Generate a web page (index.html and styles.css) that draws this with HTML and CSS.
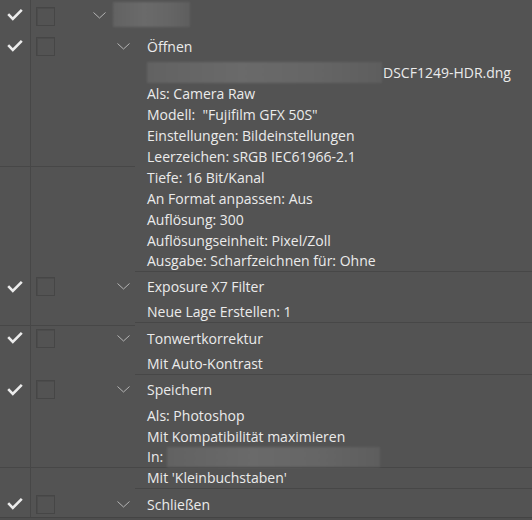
FILE: index.html
```html
<!DOCTYPE html>
<html lang="de">
<head>
<meta charset="utf-8">
<title>Aktionen</title>
<link rel="stylesheet" href="styles.css">
</head>
<body>
<div class="panel">
  <div class="row top">
    <div class="chk"><svg class="tick" width="16" height="12" viewBox="0 0 16 12"><path d="M1.2 5.2 L5.8 9.8 L14.8 0.9" /></svg></div>
    <div class="box"></div>
    <svg class="chev-set" width="13" height="7" viewBox="0 0 13 7"><path d="M0.5 0.5 L6.5 6 L12.5 0.5" /></svg>
    <div class="blur blur-name"></div>
  </div>

  <div class="row head">
    <div class="gut"><div class="chk"><svg class="tick" width="16" height="12" viewBox="0 0 16 12"><path d="M1.2 5.2 L5.8 9.8 L14.8 0.9" /></svg></div><div class="box"></div><svg class="chev" width="13" height="7" viewBox="0 0 13 7"><path d="M0.5 0.5 L6.5 6 L12.5 0.5" /></svg></div>
    <div class="txt"><div class="ln">Öffnen</div></div>
  </div>
  <div class="row det first">
    <div class="gut"><div class="chk"></div></div>
    <div class="txt"><div class="ln"><span class="blur blur-path"></span>DSCF1249-HDR.dng</div></div>
  </div>
  <div class="row det"><div class="gut"><div class="chk"></div></div><div class="txt"><div class="ln">Als: Camera Raw</div></div></div>
  <div class="row det"><div class="gut"><div class="chk"></div></div><div class="txt"><div class="ln">Modell:&nbsp; "Fujifilm GFX 50S"</div></div></div>
  <div class="row det"><div class="gut"><div class="chk"></div></div><div class="txt"><div class="ln">Einstellungen: Bildeinstellungen</div></div></div>
  <div class="row det"><div class="gut gline"><div class="chk"></div></div><div class="txt"><div class="ln">Leerzeichen: sRGB IEC61966-2.1</div></div></div>
  <div class="row det"><div class="gut"><div class="chk"></div></div><div class="txt"><div class="ln">Tiefe: 16 Bit/Kanal</div></div></div>
  <div class="row det"><div class="gut"><div class="chk"></div></div><div class="txt"><div class="ln">An Format anpassen: Aus</div></div></div>
  <div class="row det"><div class="gut"><div class="chk"></div></div><div class="txt"><div class="ln">Auflösung: 300</div></div></div>
  <div class="row det"><div class="gut"><div class="chk"></div></div><div class="txt"><div class="ln">Auflösungseinheit: Pixel/Zoll</div></div></div>
  <div class="row det last"><div class="gut"><div class="chk"></div></div><div class="txt"><div class="ln">Ausgabe: Scharfzeichnen für: Ohne</div></div></div>

  <div class="row head">
    <div class="gut"><div class="chk"><svg class="tick" width="16" height="12" viewBox="0 0 16 12"><path d="M1.2 5.2 L5.8 9.8 L14.8 0.9" /></svg></div><div class="box"></div><svg class="chev" width="13" height="7" viewBox="0 0 13 7"><path d="M0.5 0.5 L6.5 6 L12.5 0.5" /></svg></div>
    <div class="txt"><div class="ln">Exposure X7 Filter</div></div>
  </div>
  <div class="row det first last"><div class="gut gline"><div class="chk"></div></div><div class="txt"><div class="ln">Neue Lage Erstellen: 1</div></div></div>

  <div class="row head">
    <div class="gut"><div class="chk"><svg class="tick" width="16" height="12" viewBox="0 0 16 12"><path d="M1.2 5.2 L5.8 9.8 L14.8 0.9" /></svg></div><div class="box"></div><svg class="chev" width="13" height="7" viewBox="0 0 13 7"><path d="M0.5 0.5 L6.5 6 L12.5 0.5" /></svg></div>
    <div class="txt"><div class="ln">Tonwertkorrektur</div></div>
  </div>
  <div class="row det first last"><div class="gut"><div class="chk"></div></div><div class="txt"><div class="ln">Mit Auto-Kontrast</div></div></div>

  <div class="row head">
    <div class="gut"><div class="chk"><svg class="tick" width="16" height="12" viewBox="0 0 16 12"><path d="M1.2 5.2 L5.8 9.8 L14.8 0.9" /></svg></div><div class="box"></div><svg class="chev" width="13" height="7" viewBox="0 0 13 7"><path d="M0.5 0.5 L6.5 6 L12.5 0.5" /></svg></div>
    <div class="txt"><div class="ln">Speichern</div></div>
  </div>
  <div class="row det first"><div class="gut"><div class="chk"></div></div><div class="txt"><div class="ln">Als: Photoshop</div></div></div>
  <div class="row det"><div class="gut"><div class="chk"></div></div><div class="txt"><div class="ln">Mit Kompatibilität maximieren</div></div></div>
  <div class="row det"><div class="gut gline"><div class="chk"></div></div><div class="txt"><div class="ln split">In: <span class="blur blur-in"></span></div></div></div>
  <div class="row det last"><div class="gut"><div class="chk"></div></div><div class="txt"><div class="ln">Mit 'Kleinbuchstaben'</div></div></div>

  <div class="row head">
    <div class="gut"><div class="chk"><svg class="tick" width="16" height="12" viewBox="0 0 16 12"><path d="M1.2 5.2 L5.8 9.8 L14.8 0.9" /></svg></div><div class="box"></div><svg class="chev" width="13" height="7" viewBox="0 0 13 7"><path d="M0.5 0.5 L6.5 6 L12.5 0.5" /></svg></div>
    <div class="txt"><div class="ln">Schließen</div></div>
  </div>
  <div class="foot"></div>
</div>
</body>
</html>
```

FILE: styles.css
```css
html, body {
  margin: 0;
  padding: 0;
  background: #535353;
  overflow: hidden;
}

.panel {
  width: 532px;
  height: 520px;
  display: flex;
  flex-direction: column;
  background: #535353;
  color: #ebebeb;
  font-family: "Open Sans", "Noto Sans", sans-serif;
  font-size: 14px;
}

.row {
  display: flex;
  flex: none;
}

.row.top {
  height: 33.5px;
  align-items: stretch;
}

.row.top .chk {
  padding-bottom: 3px;
}

.row.top .box {
  align-self: flex-start;
  margin-top: 7px;
}

.chev-set {
  align-self: flex-start;
  flex: none;
  margin-top: 12px;
  margin-left: 38px;
}

.chev-set path,
.chev path {
  fill: none;
  stroke: #b4b4b4;
  stroke-width: 1;
}

.blur-name {
  align-self: flex-start;
  margin-top: 2px;
  margin-left: 7px;
  width: 77px;
  height: 25px;
}

.gut {
  width: 135px;
  flex: none;
  display: flex;
  align-items: center;
  box-sizing: border-box;
}

.gut.gline {
  border-bottom: 1px solid #474747;
}

.chk {
  width: 30px;
  align-self: stretch;
  flex: none;
  border-right: 1px solid #474747;
  display: flex;
  align-items: center;
  justify-content: center;
}

.tick path {
  fill: none;
  stroke: #ececec;
  stroke-width: 2.6;
  stroke-linecap: butt;
  stroke-linejoin: miter;
}

.box {
  width: 19px;
  height: 19px;
  margin-left: 5px;
  flex: none;
  border: 1px solid #464646;
  box-shadow: inset 1px 1px 0 #4c4c4c;
  box-sizing: border-box;
}

.chev {
  margin-left: 62px;
  flex: none;
}

.txt {
  flex: 1;
  min-width: 0;
}

.ln {
  padding-left: 12px;
  line-height: 21px;
  white-space: nowrap;
  display: flex;
  align-items: center;
}

.row.head {
  height: 25.5px;
}

.row.head .txt {
  display: flex;
  align-items: center;
}

.row.det.first .txt {
  padding-top: 2.5px;
}

.row.det.last .txt {
  padding-bottom: 2.5px;
}

.row.det.last .ln {
  border-bottom: 1px solid #474747;
  line-height: 20px;
}

.ln.split {
  border-bottom: 1px solid #474747;
  line-height: 20px;
}

.blur {
  display: block;
  background: linear-gradient(90deg, #626262, #6a6a6a 40%, #666 70%, #5e5e5e);
  filter: blur(1.2px);
  flex: none;
}

.blur-path {
  width: 235px;
  height: 21px;
  margin-right: 1px;
}

.blur-in {
  width: 213px;
  height: 20px;
  margin-left: 4px;
}

.foot {
  flex: 1;
  border-top: 1px solid #444;
  background: #4e4e4e;
}
```
